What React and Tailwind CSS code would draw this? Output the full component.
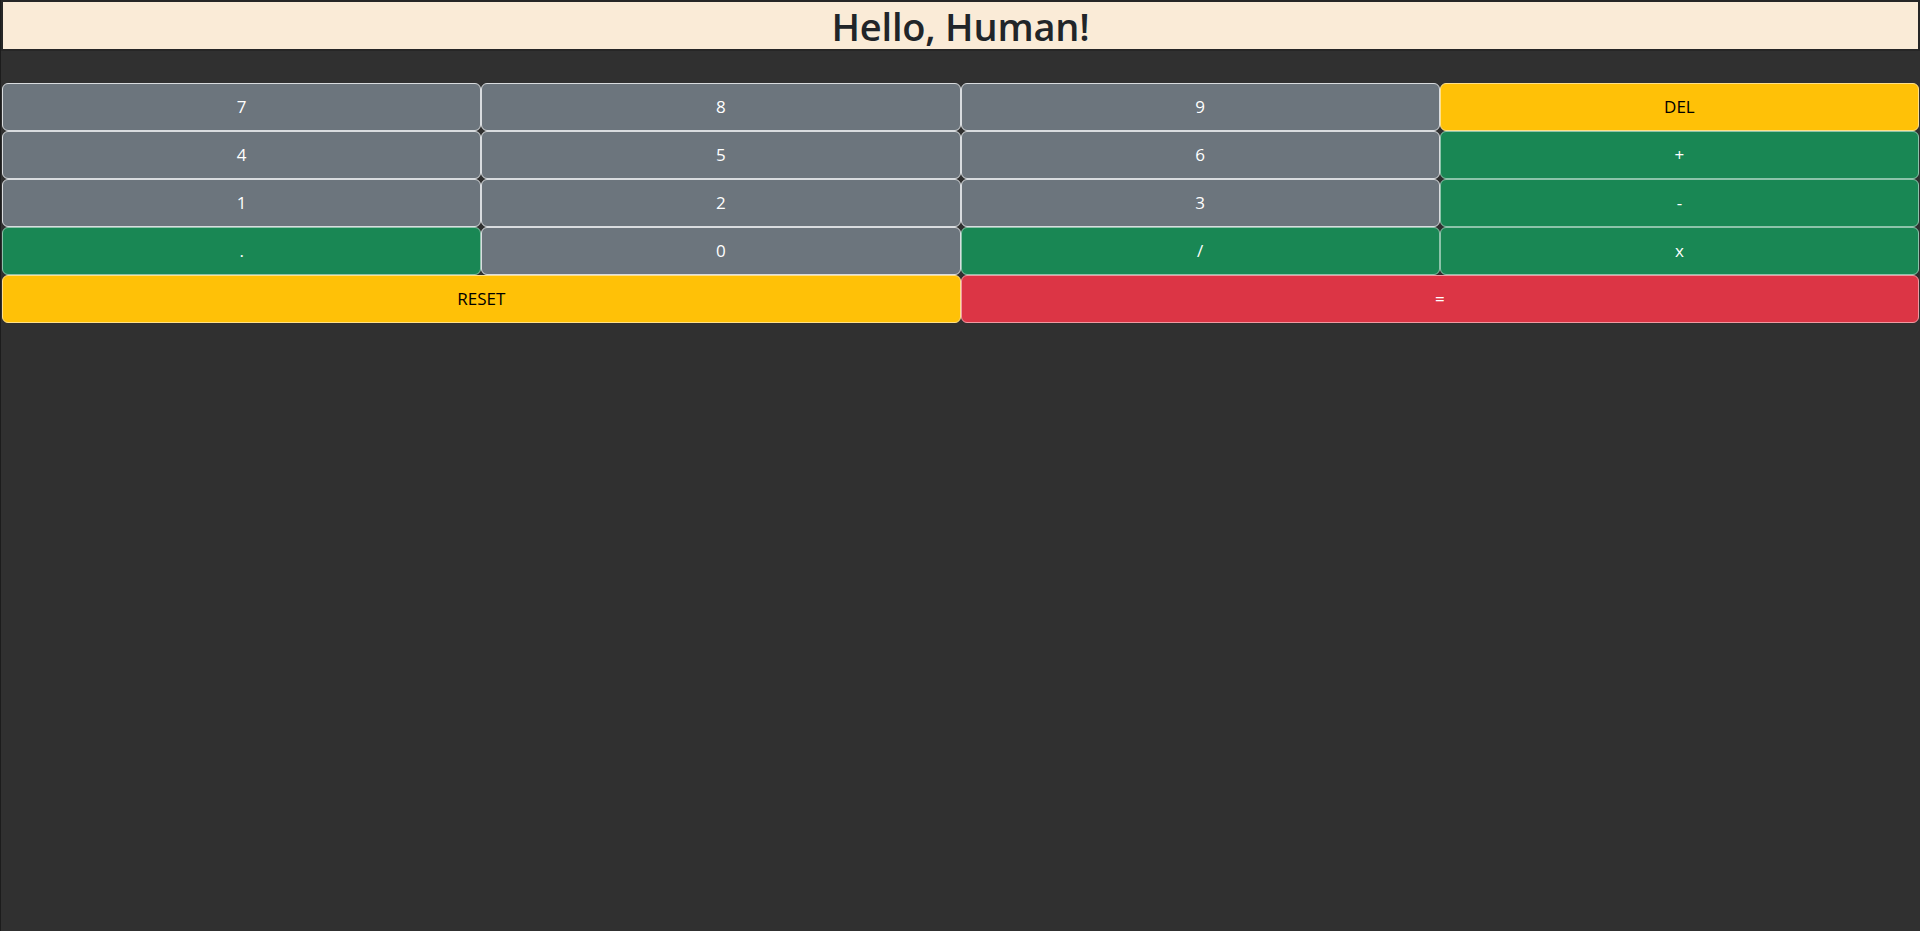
import React from 'react'

const KEYS = [
  { label: '7', tone: 'grey' },
  { label: '8', tone: 'grey' },
  { label: '9', tone: 'grey' },
  { label: 'DEL', tone: 'yellow' },
  { label: '4', tone: 'grey' },
  { label: '5', tone: 'grey' },
  { label: '6', tone: 'grey' },
  { label: '+', tone: 'green' },
  { label: '1', tone: 'grey' },
  { label: '2', tone: 'grey' },
  { label: '3', tone: 'grey' },
  { label: '-', tone: 'green' },
  { label: '.', tone: 'green' },
  { label: '0', tone: 'grey' },
  { label: '/', tone: 'green' },
  { label: 'x', tone: 'green' },
  { label: 'RESET', tone: 'yellow', wide: true },
  { label: '=', tone: 'red', wide: true },
]

const TONES = {
  grey: 'bg-[#6c757d] text-white border-[#d9dcdf]',
  green: 'bg-[#198754] text-white border-[#8cc3aa]',
  yellow: 'bg-[#ffc107] text-black border-[#ffe08a]',
  red: 'bg-[#dc3545] text-white border-[#ee9aa2]',
}

export default function App() {
  return (
    <div
      className="min-h-screen bg-[#303030] border-l border-[#1c1c1c]"
      style={{ fontFamily: '"Open Sans", "Noto Sans", sans-serif' }}
    >
      {/* header */}
      <div className="h-[51px] bg-[#faebd7] border-2 border-[#262626] flex items-center justify-center">
        <h1 className="text-[38px] leading-none font-semibold text-[#212529] tracking-[-0.2px] pt-[1px]">
          Hello, Human!
        </h1>
      </div>

      {/* keypad */}
      <div className="grid grid-cols-4 mt-[32px] px-px">
        {KEYS.map((k) => (
          <button
            key={k.label}
            className={`h-12 flex items-center justify-center rounded-[6px] border text-[17px] ${TONES[k.tone]} ${k.wide ? 'col-span-2' : ''}`}
          >
            {k.label}
          </button>
        ))}
      </div>
    </div>
  )
}
